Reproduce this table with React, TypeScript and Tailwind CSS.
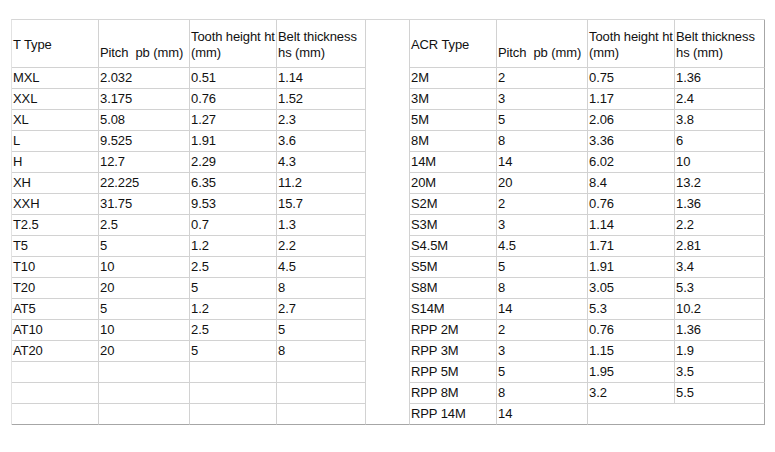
import React from "react";

const left: string[][] = [
  ["MXL", "2.032", "0.51", "1.14"],
  ["XXL", "3.175", "0.76", "1.52"],
  ["XL", "5.08", "1.27", "2.3"],
  ["L", "9.525", "1.91", "3.6"],
  ["H", "12.7", "2.29", "4.3"],
  ["XH", "22.225", "6.35", "11.2"],
  ["XXH", "31.75", "9.53", "15.7"],
  ["T2.5", "2.5", "0.7", "1.3"],
  ["T5", "5", "1.2", "2.2"],
  ["T10", "10", "2.5", "4.5"],
  ["T20", "20", "5", "8"],
  ["AT5", "5", "1.2", "2.7"],
  ["AT10", "10", "2.5", "5"],
  ["AT20", "20", "5", "8"],
  ["", "", "", ""],
  ["", "", "", ""],
  ["", "", "", ""],
];

const right: string[][] = [
  ["2M", "2", "0.75", "1.36"],
  ["3M", "3", "1.17", "2.4"],
  ["5M", "5", "2.06", "3.8"],
  ["8M", "8", "3.36", "6"],
  ["14M", "14", "6.02", "10"],
  ["20M", "20", "8.4", "13.2"],
  ["S2M", "2", "0.76", "1.36"],
  ["S3M", "3", "1.14", "2.2"],
  ["S4.5M", "4.5", "1.71", "2.81"],
  ["S5M", "5", "1.91", "3.4"],
  ["S8M", "8", "3.05", "5.3"],
  ["S14M", "14", "5.3", "10.2"],
  ["RPP 2M", "2", "0.76", "1.36"],
  ["RPP 3M", "3", "1.15", "1.9"],
  ["RPP 5M", "5", "1.95", "3.5"],
  ["RPP 8M", "8", "3.2", "5.5"],
  ["RPP 14M", "14", "", ""],
];

const hd =
  "h-[48px] border-r border-b border-[#d2d2d2] pl-[1px] pt-[3px] align-middle whitespace-nowrap font-normal text-left";

export default function App() {
  return (
    <div className="w-[775px] h-[452px] bg-white pt-[19px] pl-[11px] font-['Liberation_Sans',Arial,sans-serif] text-[13px] leading-[16.5px] text-[#111] tracking-[-0.1px]">
      <table className="table-fixed border-separate border-spacing-0 w-[754px] border-l border-t border-l-[#e2e2e2] border-t-[#d6d6d6]">
        <tbody>
          <tr>
            <td className={`${hd} w-[87px]`}>T Type</td>
            <td className={`${hd} w-[91px]`}>
              <br />
              Pitch&nbsp; pb (mm)
            </td>
            <td className={`${hd} w-[87px]`}>
              Tooth height ht
              <br />
              (mm)
            </td>
            <td className={`${hd} w-[89px]`}>
              Belt thickness
              <br />
              hs (mm)
            </td>
            <td
              rowSpan={18}
              className="w-[44px] border-r border-b border-r-[#d2d2d2] border-b-[#a6a6a6]"
            ></td>
            <td className={`${hd} w-[87px]`}>ACR Type</td>
            <td className={`${hd} w-[91px]`}>
              <br />
              Pitch&nbsp; pb (mm)
            </td>
            <td className={`${hd} w-[87px]`}>
              Tooth height ht
              <br />
              (mm)
            </td>
            <td className={`${hd} w-[90px] border-r-[#a6a6a6]`}>
              Belt thickness
              <br />
              hs (mm)
            </td>
          </tr>
          {left.map((l, i) => {
            const r = right[i];
            const last = i === left.length - 1;
            const base = `h-[21px] border-r border-b border-[#d2d2d2] pl-[1px] pt-[1px] align-middle whitespace-nowrap ${
              last ? "border-b-[#a6a6a6]" : ""
            }`;
            return (
              <tr key={i}>
                {l.map((c, j) => (
                  <td key={"l" + j} className={base}>
                    {c}
                  </td>
                ))}
                {last ? (
                  <>
                    <td className={base}>{r[0]}</td>
                    <td className={base}>{r[1]}</td>
                    <td colSpan={2} className={`${base} border-r-[#a6a6a6]`}></td>
                  </>
                ) : (
                  r.map((c, j) => (
                    <td
                      key={"r" + j}
                      className={`${base} ${j === 3 ? "border-r-[#a6a6a6]" : ""}`}
                    >
                      {c}
                    </td>
                  ))
                )}
              </tr>
            );
          })}
        </tbody>
      </table>
    </div>
  );
}
